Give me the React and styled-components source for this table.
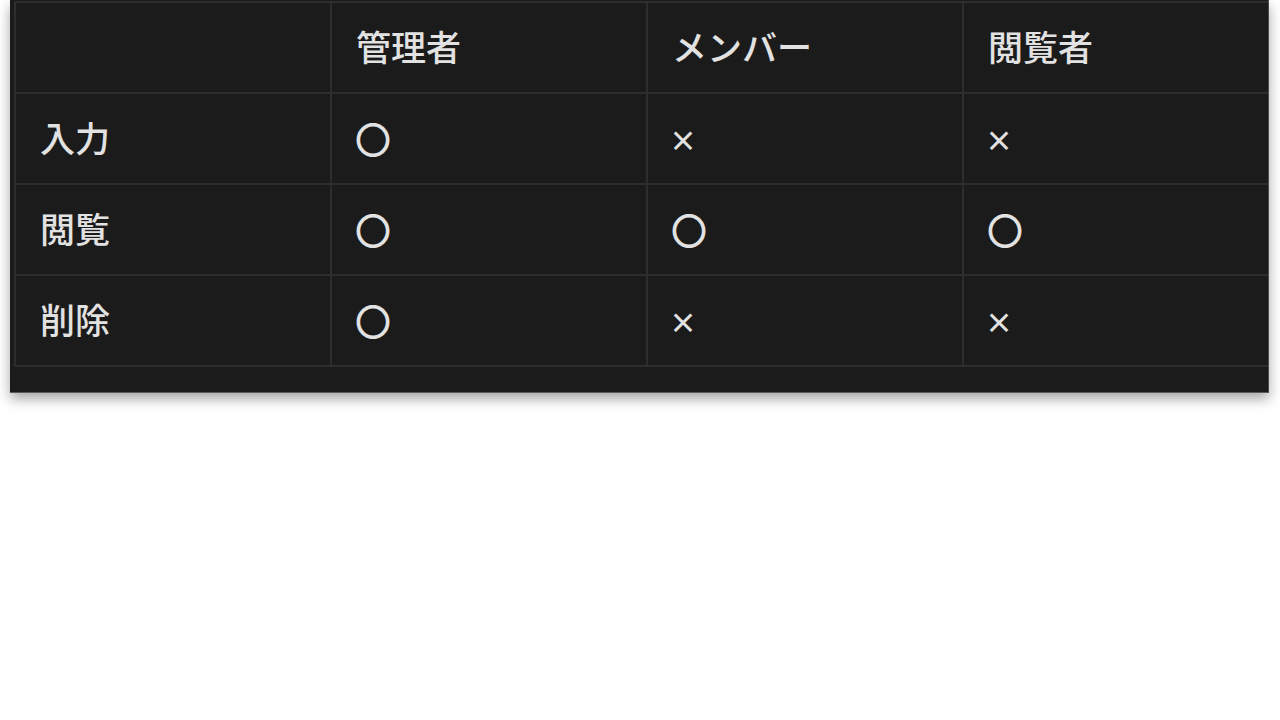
import styled, { createGlobalStyle } from "styled-components";

const roles = ["管理者", "メンバー", "閲覧者"];

const rows = [
  { label: "入力", values: ["〇", "×", "×"] },
  { label: "閲覧", values: ["〇", "〇", "〇"] },
  { label: "削除", values: ["〇", "×", "×"] },
];

export default function App() {
  return (
    <>
      <GlobalStyle />
      <StyledPage>
        <StyledPanel>
          <StyledTable>
            <thead>
              <tr>
                <StyledHeadCell />
                {roles.map((role) => (
                  <StyledHeadCell key={role}>{role}</StyledHeadCell>
                ))}
              </tr>
            </thead>
            <tbody>
              {rows.map((row) => (
                <tr key={row.label}>
                  <StyledCell>{row.label}</StyledCell>
                  {row.values.map((value, index) => (
                    <StyledCell key={index}>
                      <StyledMark $cross={value === "×"}>{value}</StyledMark>
                    </StyledCell>
                  ))}
                </tr>
              ))}
            </tbody>
          </StyledTable>
        </StyledPanel>
      </StyledPage>
    </>
  );
}

const GlobalStyle = createGlobalStyle`
  body {
    margin: 0;
    background: #fff;
    font-family: "Noto Sans CJK JP", "Noto Sans", sans-serif;
  }
`;

const StyledPage = styled.div`
  padding: 0 11px 24px 10px;
  min-height: 720px;
  box-sizing: border-box;
  background: #fff;
`;

const StyledPanel = styled.div`
  position: relative;
  height: 393px;
  box-sizing: border-box;
  padding: 1px 0 0 4px;
  background-color: #1b1b1b;
  border-right: 1px solid #4a4a4a;
  border-bottom: 1px solid #5a5a5a;
  box-shadow: 0 6px 12px rgba(0, 0, 0, 0.35);
  overflow: hidden;
`;

const StyledTable = styled.table`
  border-collapse: collapse;
  table-layout: fixed;
  width: 1264px;
  color: #e2e2e2;
`;

const StyledHeadCell = styled.th`
  height: 91px;
  width: 316px;
  padding: 0 0 5px 24px;
  border: 2px solid #2d2d2d;
  text-align: left;
  font-size: 35px;
  font-weight: 500;
  vertical-align: middle;
  box-sizing: border-box;
`;

const StyledCell = styled.td`
  height: 91px;
  padding: 0 0 5px 24px;
  border: 2px solid #2d2d2d;
  font-size: 35px;
  font-weight: 500;
  vertical-align: middle;
  box-sizing: border-box;
`;

const StyledMark = styled.span`
  display: inline-block;
  font-size: ${({ $cross }) => ($cross ? "28px" : "36px")};
  font-weight: ${({ $cross }) => ($cross ? 700 : 500)};
  margin-left: ${({ $cross }) => ($cross ? "-3px" : "-1px")};
  padding-top: ${({ $cross }) => ($cross ? "4px" : "3px")};
`;
